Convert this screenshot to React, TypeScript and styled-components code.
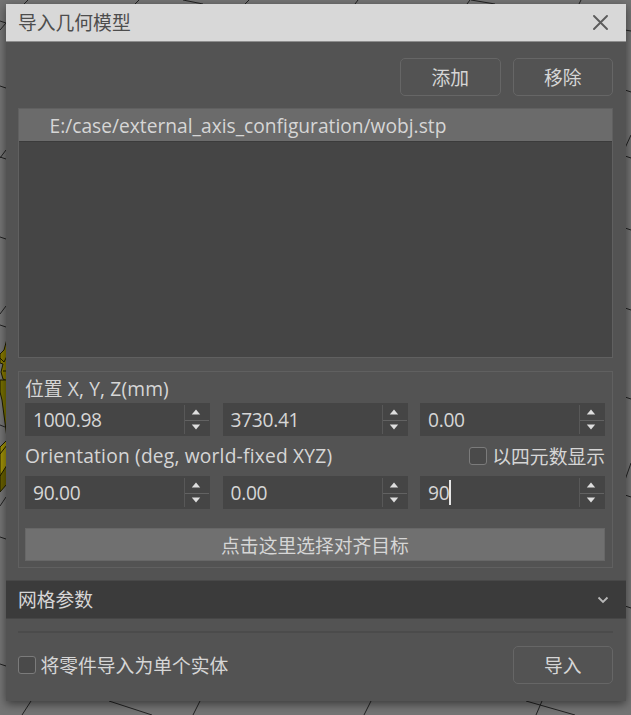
import React, { useState } from "react";
import styled, { createGlobalStyle } from "styled-components";

const Global = createGlobalStyle`
  * { box-sizing: border-box; }
  body { margin: 0; overflow: hidden; background: #747474; }
  button, input { font: inherit; color: inherit; }
`;

const Viewport = styled.main`
  position: relative;
  width: 631px;
  height: 715px;
  padding: 4px 6px 14px;
  overflow: hidden;
  background: #747474;
  font-family: "Open Sans", "Noto Sans CJK SC", sans-serif;
  font-size: 18.8px;
  color: #d6d6d6;
`;

const Scene = styled.svg`
  position: absolute;
  inset: 0;
`;

const Dialog = styled.section`
  position: relative;
  width: 619.5px;
  height: 697px;
  background: #535353;
  box-shadow: 0 3px 9px rgba(0, 0, 0, 0.5);
`;

const TitleBar = styled.header`
  display: flex;
  align-items: center;
  justify-content: space-between;
  height: 38px;
  padding: 0 18px 0 12px;
  background: #d8d8d8;
  border-bottom: 1px solid #8d8d8d;
  color: #4d4d4d;
`;

const Label = styled.span`
  display: block;
  line-height: 24px;
  white-space: nowrap;
`;

const Latin = styled.span<{ $track?: number }>`
  font-size: 19.2px;
  line-height: 24px;
  letter-spacing: ${(p) => p.$track ?? 0}px;
`;

const IconButton = styled.button`
  display: grid;
  place-items: center;
  padding: 0;
  border: 0;
  background: none;
`;

const Toolbar = styled.div`
  display: flex;
  justify-content: flex-end;
  gap: 12px;
  padding: 16px 12.5px 12px 0;
`;

const Button = styled.button`
  display: grid;
  place-items: center;
  width: 100.5px;
  height: 38px;
  padding: 0;
  border: 1.5px solid #666;
  border-radius: 5px;
  background: #535353;
`;

const FileList = styled.div`
  height: 250px;
  margin: 0 13px 13px 11.5px;
  border: 1px solid #606060;
  background: #454545;
`;

const FileRow = styled.div`
  display: flex;
  align-items: center;
  height: 33px;
  padding: 2px 0 0 31px;
  background: #6b6b6b;
  border-bottom: 1px solid #3b3b3b;
`;

const Group = styled.fieldset`
  height: 197px;
  margin: 0 13px 12px 11.5px;
  padding: 3px 6.5px 0;
  border: 1px solid #606060;
`;

const HeadRow = styled.div<{ $height: number; $lift?: number }>`
  display: flex;
  align-items: center;
  justify-content: space-between;
  height: ${(p) => p.$height}px;
  padding-bottom: ${(p) => p.$lift ?? 0}px;
`;

const Fields = styled.div`
  display: grid;
  grid-template-columns: repeat(3, 185px);
  justify-content: space-between;
`;

const Spin = styled.div`
  display: flex;
  align-items: stretch;
  height: 33px;
  padding: 1px;
  background: #454545;
`;

const Value = styled.div`
  display: flex;
  flex: 1;
  align-items: center;
  padding-left: 7px;
`;

const Caret = styled.i`
  width: 2px;
  height: 25px;
  background: #e5e5e5;
`;

const Steps = styled.div`
  display: grid;
  grid-template-rows: 1fr 1fr;
  width: 25px;
  margin: 1px 0;
  border-left: 1px solid #585858;
`;

const Step = styled.button`
  display: grid;
  place-items: center;
  padding: 0 2px 0 0;
  border: 0;
  background: none;
  & + & { border-top: 1px solid #626262; }
`;

const Check = styled.label`
  display: flex;
  align-items: center;
  gap: 5px;
`;

const CheckBox = styled.input`
  appearance: none;
  width: 18px;
  height: 18px;
  margin: 0;
  border: 1.5px solid #7b7b7b;
  border-radius: 3px;
  background: #4a4a4a;
  &:checked { background: #9a9a9a; }
`;

const CheckText = styled(Label)`
  padding-top: 2px;
`;

const AlignButton = styled.button`
  display: grid;
  place-items: center;
  width: 100%;
  height: 33px;
  margin-top: 19px;
  padding: 0;
  border: 1px solid #676767;
  background: #707070;
`;

const Section = styled.div`
  display: flex;
  align-items: center;
  justify-content: space-between;
  height: 39px;
  padding: 0 17px 0 12px;
  border-top: 1px solid #484848;
  border-bottom: 1px solid #464646;
  background: #3b3b3b;
`;

const Rule = styled.hr`
  height: 2px;
  margin: 12px 13px 13px 11.5px;
  border: 0;
  background: #4b4b4b;
`;

const Footer = styled.footer`
  display: flex;
  align-items: center;
  justify-content: space-between;
  padding: 0 12.5px 0 11.5px;
`;

function Spinner({ value, active }: { value: string; active?: boolean }) {
  return (
    <Spin>
      <Value>
        <Latin $track={-0.3}>{value}</Latin>
        {active && <Caret />}
      </Value>
      <Steps>
        <Step aria-label="+"><svg width="10" height="6"><path d="M5 .5 9.2 5.5H.8Z" fill="#dedede" /></svg></Step>
        <Step aria-label="-"><svg width="10" height="6"><path d="M5 5.5 9.2 .5H.8Z" fill="#dedede" /></svg></Step>
      </Steps>
    </Spin>
  );
}

export default function App() {
  const [quat, setQuat] = useState(false);
  const [single, setSingle] = useState(false);
  return (
    <Viewport>
      <Global />
      <Scene width="631" height="715" fill="none" stroke="#222" strokeWidth="1">
        <g fill="#867900" stroke="#1d1b00">
          <path d="M7 339 4 350 0 354V363L3 364 1 372 3 379 7 381Z" />
          <path d="M0 380H7V438L2 400 0 392Z" fill="#777000" />
          <path d="M0 470 7 460V484L0 492Z" fill="#686000" />
          <path d="M0 447 7 440V465L0 476Z" fill="#a09209" />
          <path d="M0 454 7 445M0 358 4 362 7 356M3 371H7" fill="none" />
        </g>
        <path d="M24 4 28 0M135 4 139 0M183 0 203 4M245 4 249 0M355 4 358 0M467 4 470 0M471 0 495 4M579 4 581 0" />
        <path d="M0 21 6 23 0 30M0 86 6 88M0 158 6 150M0 157 6 159M0 237 6 239M0 314 6 306M0 325 6 327M0 425 5 427M0 506 6 497M0 537 6 539M0 664 6 666" />
        <path d="M22 715 31 701M109 701 152 715M193 715 200 701M364 715 371 701M526 701 575 715M536 715 542 701" />
        <path d="M625 30 631 31M625 90 631 92M625 148 631 135M625 156 631 158M625 228 631 230M625 308 631 310M625 397 631 399M625 480 631 463M625 495 631 497M625 606 631 608" />
      </Scene>
      <Dialog>
        <TitleBar>
          <Label>导入几何模型</Label>
          <IconButton aria-label="×">
            <svg width="15" height="15" stroke="#5c5c5c" strokeWidth="1.9" strokeLinecap="round"><path d="m1 1 13 13M14 1 1 14" /></svg>
          </IconButton>
        </TitleBar>
        <Toolbar><Button>添加</Button><Button>移除</Button></Toolbar>
        <FileList>
          <FileRow><Latin>E:/case/external_axis_configuration/wobj.stp</Latin></FileRow>
        </FileList>
        <Group>
          <HeadRow $height={28} $lift={1}><Label>位置<Latin $track={0.15}> X, Y, Z(mm)</Latin></Label></HeadRow>
          <Fields>
            <Spinner value="1000.98" />
            <Spinner value="3730.41" />
            <Spinner value="0.00" />
          </Fields>
          <HeadRow $height={40}>
            <Latin $track={0.2}>Orientation (deg, world-fixed XYZ)</Latin>
            <Check><CheckBox type="checkbox" checked={quat} onChange={() => setQuat(!quat)} /><CheckText>以四元数显示</CheckText></Check>
          </HeadRow>
          <Fields>
            <Spinner value="90.00" />
            <Spinner value="0.00" />
            <Spinner value="90" active />
          </Fields>
          <AlignButton>点击这里选择对齐目标</AlignButton>
        </Group>
        <Section>
          <Label>网格参数</Label>
          <svg width="12" height="8" fill="none" stroke="#b8b8b8" strokeWidth="1.8"><path d="m1.5 1.5 4.5 4.5 4.5-4.5" /></svg>
        </Section>
        <Rule />
        <Footer>
          <Check><CheckBox type="checkbox" checked={single} onChange={() => setSingle(!single)} /><CheckText>将零件导入为单个实体</CheckText></Check>
          <Button>导入</Button>
        </Footer>
      </Dialog>
    </Viewport>
  );
}
